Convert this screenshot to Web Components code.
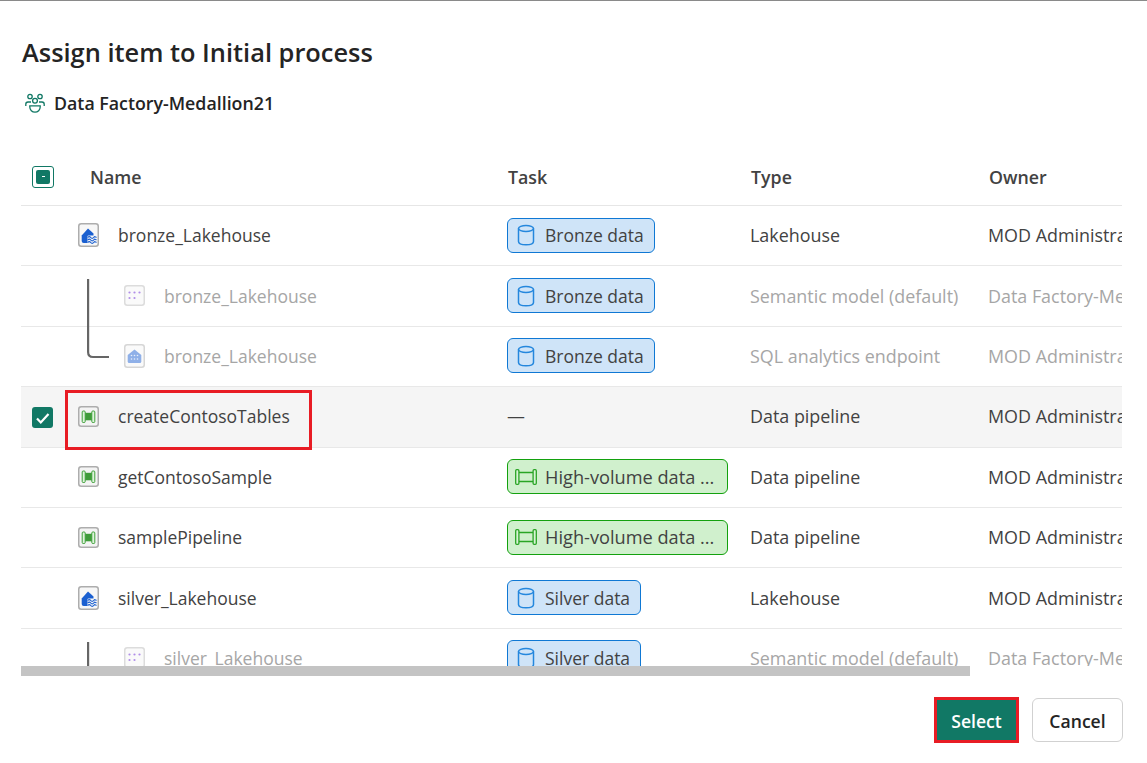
<!DOCTYPE html>
<html lang="en">
<head>
<meta charset="utf-8">
<title>Assign item</title>
<style>
html,body{margin:0;padding:0;background:#fff;height:100%;overflow:hidden}
body{font-family:"Open Sans","Noto Sans","Liberation Sans",sans-serif}
</style>
</head>
<body>
<assign-dialog>
  <span slot="title">Assign item to Initial process</span>
  <span slot="workspace">Data Factory-Medallion21</span>

  <item-row icon="lake"><span>bronze_Lakehouse</span>
    <task-pill slot="task" kind="db">Bronze data</task-pill><span slot="type">Lakehouse</span><span slot="owner">MOD Administrator</span></item-row>
  <item-row icon="model" dim tree="start"><span>bronze_Lakehouse</span>
    <task-pill slot="task" kind="db">Bronze data</task-pill><span slot="type">Semantic model (default)</span><span slot="owner">Data Factory-Medallion21</span></item-row>
  <item-row icon="sql" dim tree="end"><span>bronze_Lakehouse</span>
    <task-pill slot="task" kind="db">Bronze data</task-pill><span slot="type">SQL analytics endpoint</span><span slot="owner">MOD Administrator</span></item-row>
  <item-row icon="pipe" selected><span>createContosoTables</span>
    <span slot="task">—</span><span slot="type">Data pipeline</span><span slot="owner">MOD Administrator</span></item-row>
  <item-row icon="pipe"><span>getContosoSample</span>
    <task-pill slot="task" kind="pipe">High-volume data ...</task-pill><span slot="type">Data pipeline</span><span slot="owner">MOD Administrator</span></item-row>
  <item-row icon="pipe"><span>samplePipeline</span>
    <task-pill slot="task" kind="pipe">High-volume data ...</task-pill><span slot="type">Data pipeline</span><span slot="owner">MOD Administrator</span></item-row>
  <item-row icon="lake"><span>silver_Lakehouse</span>
    <task-pill slot="task" kind="db">Silver data</task-pill><span slot="type">Lakehouse</span><span slot="owner">MOD Administrator</span></item-row>
  <item-row icon="model" dim tree="start"><span>silver_Lakehouse</span>
    <task-pill slot="task" kind="db">Silver data</task-pill><span slot="type">Semantic model (default)</span><span slot="owner">Data Factory-Medallion21</span></item-row>

  <action-button slot="actions" primary>Select</action-button>
  <action-button slot="actions">Cancel</action-button>
</assign-dialog>

<script>
const ICONS = {
  lake: `<svg width="21" height="24" viewBox="0 0 21 24"><rect x=".75" y=".75" width="19.5" height="22.5" rx="2.5" fill="#f7f7f7" stroke="#adadad" stroke-width="1.5"/><path d="M3.7 12.5 10 5.5l5.5 5V20H5.700a2 2 0 0 1-2-2Z" fill="#1a5fd0"/><rect x="9.500" y="12.500" width="9" height="8" rx="1" fill="#f7f7f7"/><path d="M9.700 14.500c1.100-1.200 2.100-1.200 3 0s2.100 1.200 3 0 1.700-1 2.800 0M9.700 17c1.100-1.200 2.100-1.200 3 0s2.100 1.200 3 0 1.700-1 2.800 0M9.700 19.500c1.100-1.200 2.100-1.200 3 0s2.100 1.200 3 0 1.700-1 2.800 0" fill="none" stroke="#1a5fd0" stroke-width="1.100"/></svg>`,
  pipe: `<svg width="21" height="21" viewBox="0 0 21 21"><rect x=".75" y=".75" width="19.5" height="19.5" rx="2.5" fill="#f4f4f4" stroke="#adadad" stroke-width="1.5"/><rect x="7" y="6.800" width="7" height="7.500" fill="#3f9b3a"/><rect x="4.200" y="5" width="3" height="11.500" rx="1" fill="#dff3dc" stroke="#3fa13a"/><rect x="13.800" y="5" width="3" height="11.500" rx="1" fill="#dff3dc" stroke="#3fa13a"/></svg>`,
  model: `<svg width="21" height="21" viewBox="0 0 21 21"><rect x=".75" y=".75" width="19.5" height="19.5" rx="2.5" fill="#fafafa" stroke="#dcdcdc" stroke-width="1.5"/><g fill="#b08ee8"><circle cx="5.500" cy="7.500" r="1.100"/><circle cx="10.500" cy="7.500" r="1.100"/><circle cx="15.500" cy="7.500" r="1.100"/><circle cx="5.500" cy="13" r="1.100"/><circle cx="10.500" cy="13" r="1.100"/></g></svg>`,
  sql: `<svg width="21" height="24" viewBox="0 0 21 24"><rect x=".75" y=".75" width="19.5" height="22.5" rx="2.5" fill="#fafafa" stroke="#d6d6d6" stroke-width="1.5"/><path d="M3.700 11 10.500 5.500 17.300 11V17.500a1.500 1.500 0 0 1-1.500 1.500H5.200a1.500 1.500 0 0 1-1.500-1.500Z" fill="#8fb0e8"/><g fill="#e8effb"><circle cx="7.500" cy="11.500" r=".8"/><circle cx="10.500" cy="11.500" r=".8"/><circle cx="13.500" cy="11.500" r=".8"/><circle cx="7.500" cy="15" r=".8"/><circle cx="10.500" cy="15" r=".8"/><circle cx="13.500" cy="15" r=".8"/></g></svg>`
};

function define(name, html, init) {
  const t = document.createElement('template');
  t.innerHTML = html;
  customElements.define(name, class extends HTMLElement {
    constructor() {
      super();
      this.attachShadow({mode:'open'}).appendChild(t.content.cloneNode(true));
    }
    connectedCallback() { if (init) init(this, this.shadowRoot); }
  });
}

define('assign-dialog', `
<style>
:host{display:flex;flex-direction:column;box-sizing:border-box;height:763px;border-top:1px solid #8a8a8a;padding:0 24px 20px 21px;color:#242424}
h1{margin:0;padding:30px 0 0 1px;font-size:25.4px;line-height:42px;font-weight:600;height:42px;color:#242424}
.ws{display:flex;align-items:center;gap:10px;margin:18px 0 0 3px;height:24px;font-size:17.8px;font-weight:600;color:#242424}
.ws svg{display:block;margin-left:.5px;margin-right:-.5px}
.table{flex:1;min-height:0;overflow:hidden;margin-top:35px;width:1101px}
.head{display:grid;grid-template-columns:486px 243px 238px 1fr;height:56px;box-sizing:border-box;border-bottom:1px solid #e6e6e6;align-items:center;font-size:17.8px;font-weight:600;color:#424242;white-space:nowrap;padding-bottom:2px}
.nm{display:flex;align-items:center}
.cb{box-sizing:border-box;width:22px;height:22px;margin:0 36px 0 11px;border:1px solid #117865;border-radius:3px;display:flex;align-items:center;justify-content:center;flex:none}
.cb i{display:flex;align-items:center;justify-content:center;width:14px;height:14px;background:#117865;border-radius:2px}
.cb b{display:block;width:3px;height:1.5px;background:#fff}
.bar{height:10px;width:949px;background:#c4c4c4;flex:none}
.foot{display:flex;justify-content:flex-end;align-items:center;gap:13px;margin-top:21px;height:46px}
</style>
<h1><slot name="title"></slot></h1>
<div class="ws">
<svg width="20" height="20" viewBox="0 0 20 20" fill="none" stroke="#117865" stroke-width="1.300"><circle cx="5" cy="3.500" r="2.200"/><circle cx="15" cy="3.500" r="2.200"/><circle cx="10" cy="7.800" r="2.400"/><path d="M.8 13v-1.800C.8 9.800 1.800 9 3 9H6M19.200 13v-1.800C19.200 9.800 18.200 9 17 9H14"/><path d="M4.800 12.800H15.200V14a5.200 5.200 0 0 1-10.400 0Z"/></svg>
<slot name="workspace"></slot>
</div>
<div class="table">
  <div class="head">
    <div class="nm"><span class="cb"><i><b></b></i></span><span>Name</span></div>
    <div style="padding-left:1px">Task</div><div style="padding-left:1px">Type</div><div style="padding-left:1px">Owner</div>
  </div>
  <slot></slot>
</div>
<div class="bar"></div>
<div class="foot"><slot name="actions"></slot></div>
`);

define('item-row', `
<style>
:host{display:grid;grid-template-columns:486px 243px 238px 1fr;box-sizing:border-box;height:60.4px;padding-bottom:1px;border-bottom:1px solid #e8e8e8;align-items:center;font-size:17.9px;color:#424242;white-space:nowrap;position:relative}
:host([dim]){color:#a6a6a6}
:host([selected]){background:#f5f5f5;z-index:1}
.nm{display:flex;align-items:center;min-width:0;padding-left:57px;font-size:17.5px}
:host([dim]) .nm{padding-left:103px}
.ic{display:flex;flex:none;width:21px;margin-right:19px}
.cb{position:absolute;left:11px;top:20px;width:21px;height:21px;background:#117865;border-radius:3px;display:none;align-items:center;justify-content:center}
:host([selected]) .cb{display:flex}
.mark{position:absolute;left:44px;top:3px;width:247px;height:60px;box-sizing:border-box;border:3px solid #e81c24;display:none;pointer-events:none}
:host([selected]) .mark{display:block}
.tree{position:absolute;left:66px;top:0;display:none}
:host([tree]) .tree{display:block}
</style>
<span class="cb"><svg width="14" height="14" viewBox="0 0 14 14"><path d="M1 7.500 4.800 11.500 12.500 3" fill="none" stroke="#fff" stroke-width="2.200"/></svg></span>
<svg class="tree" width="24" height="61" viewBox="0 0 24 61" fill="none" stroke="#666" stroke-width="2.200"></svg>
<div class="nm"><span class="ic"></span><slot></slot></div>
<div><slot name="task"></slot></div>
<div><slot name="type"></slot></div>
<div><slot name="owner"></slot></div>
<span class="mark"></span>
`, (el, root) => {
  root.querySelector('.ic').innerHTML = ICONS[el.getAttribute('icon')] || '';
  const tree = el.getAttribute('tree');
  if (tree === 'start') root.querySelector('.tree').innerHTML = '<path d="M1.100 13V61"/>';
  if (tree === 'end') root.querySelector('.tree').innerHTML = '<path d="M1.100 0V25Q1.100 30 6 30H22"/>';
});

define('task-pill', `
<style>
:host{display:inline-flex;align-items:center;box-sizing:border-box;height:35px;border-radius:6px;border:1px solid #0f78d4;background:#cfe4f8;color:#424242;font-size:17.5px;padding:0 10px 0 9px;vertical-align:middle}
:host([kind=pipe]){border-color:#13a10e;background:#d0f0cd;padding:0 0 0 7px;width:221px;font-size:18.2px}
.i{display:flex;margin-right:10px}
:host([kind=pipe]) .i{margin-right:8px}
</style>
<span class="i"></span><slot></slot>
`, (el, root) => {
  root.querySelector('.i').innerHTML = el.getAttribute('kind') === 'pipe'
    ? `<svg width="22" height="16" viewBox="0 0 22 16" fill="none" stroke="#2aa526" stroke-width="1.300"><path d="M4 3.500H18M4 12.500H18" stroke-width="1.600"/><rect x=".7" y=".7" width="3.200" height="14.600" rx="1" fill="#d8f3d5"/><rect x="18.100" y=".7" width="3.200" height="14.600" rx="1" fill="#d8f3d5"/></svg>`
    : `<svg width="18" height="22" viewBox="0 0 18 22" fill="none" stroke="#2487dd" stroke-width="1.500"><ellipse cx="9" cy="4.500" rx="7.500" ry="3"/><path d="M1.500 4.500V17.500C1.500 19.500 5 20.800 9 20.800S16.500 19.500 16.500 17.500V4.500"/></svg>`;
});

define('action-button', `
<style>
:host{display:flex;align-items:center;justify-content:center;box-sizing:border-box;width:91px;height:44px;padding-top:1px;border:1px solid #d1d1d1;border-radius:6px;background:#fff;color:#242424;font-size:17.6px;font-weight:600}
:host([primary]){width:85px;height:46px;border:3px solid #e81c24;border-radius:0;background:#117865;color:#fff}
</style>
<slot></slot>
`);
</script>
</body>
</html>
